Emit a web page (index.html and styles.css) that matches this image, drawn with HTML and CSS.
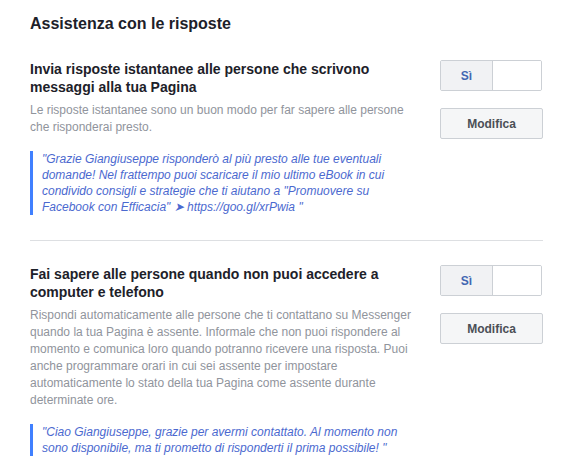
FILE: index.html
```html
<!DOCTYPE html>
<html lang="it">
    <head>
        <meta charset="UTF-8" />
        <meta name="viewport" content="width=device-width, initial-scale=1.0" />
        <title>Assistenza con le risposte</title>
        <link rel="stylesheet" href="styles.css">
    </head>
    <body>
        <div class="page">
            <h2 class="page-title">Assistenza con le risposte</h2>

            <!-- Risposte istantanee -->
            <div class="setting">
                <div class="setting-text">
                    <h3 class="setting-title">Invia risposte istantanee alle persone che scrivono messaggi alla tua Pagina</h3>
                    <p class="setting-desc">Le risposte istantanee sono un buon modo per far sapere alle persone che risponderai presto.</p>
                    <blockquote class="setting-quote">"Grazie Giangiuseppe risponderò al più presto alle tue eventuali domande! Nel frattempo puoi scaricare il mio ultimo eBook in cui condivido consigli e strategie che ti aiutano a "Promuovere su Facebook con Efficacia" ➤ https://goo.gl/xrPwia "</blockquote>
                </div>
                <div class="setting-controls">
                    <div class="toggle">
                        <span class="toggle-on">Sì</span>
                        <span class="toggle-off"></span>
                    </div>
                    <button class="btn">Modifica</button>
                </div>
            </div>

            <hr class="divider">

            <!-- Messaggio di assenza -->
            <div class="setting">
                <div class="setting-text">
                    <h3 class="setting-title">Fai sapere alle persone quando non puoi accedere a computer e telefono</h3>
                    <p class="setting-desc">Rispondi automaticamente alle persone che ti contattano su Messenger quando la tua Pagina è assente. Informale che non puoi rispondere al momento e comunica loro quando potranno ricevere una risposta. Puoi anche programmare orari in cui sei assente per impostare automaticamente lo stato della tua Pagina come assente durante determinate ore.</p>
                    <blockquote class="setting-quote">"Ciao Giangiuseppe, grazie per avermi contattato. Al momento non sono disponibile, ma ti prometto di risponderti il prima possibile! "</blockquote>
                </div>
                <div class="setting-controls">
                    <div class="toggle">
                        <span class="toggle-on">Sì</span>
                        <span class="toggle-off"></span>
                    </div>
                    <button class="btn">Modifica</button>
                </div>
            </div>
        </div>
    </body>
</html>
```

FILE: styles.css
```css
body {
    font-family: "Liberation Sans", Arial, sans-serif;
    margin: 0;
    padding: 0;
    background-color: #fff;
    color: #1d2129;
}

.page {
    width: 513px;
    padding: 14px 0 0 30px;
}

.page-title {
    margin: 0 0 26px;
    font-size: 16px;
    line-height: 20px;
    font-weight: bold;
    color: #1d2129;
}

.setting {
    display: flex;
    justify-content: space-between;
    align-items: flex-start;
}

.setting-text {
    width: 385px;
}

.setting-title {
    margin: 0;
    font-size: 14px;
    line-height: 18px;
    font-weight: bold;
    color: #1d2129;
}

.setting-desc {
    margin: 6px 0 0;
    font-size: 12px;
    line-height: 17px;
    color: #90949c;
}

.setting-quote {
    margin: 15px 0 0;
    padding: 0 0 0 9px;
    border-left: 3px solid #4080ff;
    font-size: 12px;
    line-height: 16px;
    font-style: italic;
    color: #4b69cf;
}

.setting-controls {
    display: flex;
    flex-direction: column;
    gap: 17px;
    width: 103px;
}

.toggle {
    display: flex;
    width: 102px;
    height: 31px;
    box-sizing: border-box;
    border: 1px solid #ccd0d5;
    border-radius: 2px;
    overflow: hidden;
}

.toggle-on {
    width: 51px;
    display: flex;
    justify-content: center;
    align-items: center;
    background-color: #f1f2f4;
    border-right: 1px solid #ccd0d5;
    font-size: 12px;
    font-weight: bold;
    color: #4267b2;
}

.toggle-off {
    flex-grow: 1;
    background-color: #fff;
}

.btn {
    width: 103px;
    height: 31px;
    border: 1px solid #ccd0d5;
    border-radius: 2px;
    background-color: #f5f6f7;
    font-family: inherit;
    font-size: 12px;
    font-weight: bold;
    color: #4b4f56;
    cursor: pointer;
}

.divider {
    margin: 25px 0 24px;
    border: 0;
    border-top: 1px solid #dddfe2;
}
```
